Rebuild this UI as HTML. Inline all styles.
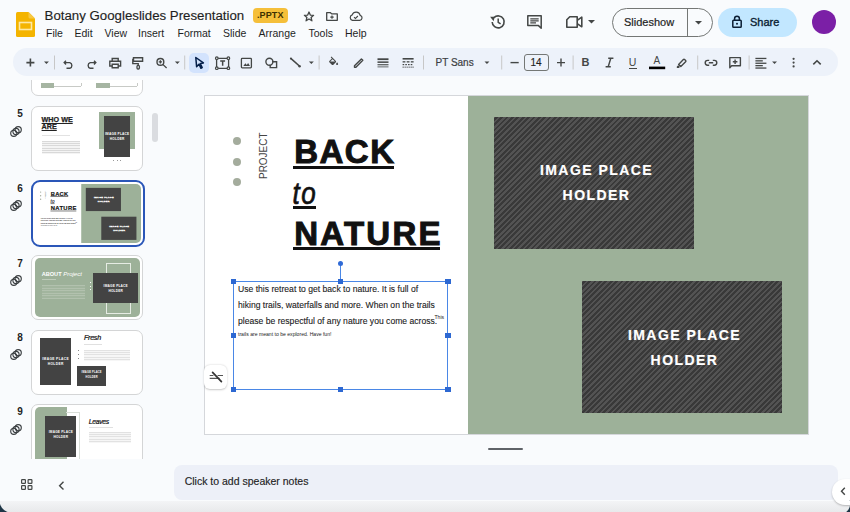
<!DOCTYPE html>
<html><head><meta charset="utf-8">
<style>
*{box-sizing:border-box;margin:0;padding:0}
html,body{width:850px;height:512px;overflow:hidden;background:#f9fbfd;font-family:"Liberation Sans",sans-serif;color:#1f1f1f}
.a{position:absolute}
.t{white-space:nowrap;line-height:1}
svg{position:absolute;overflow:visible}
.menu span{position:absolute;top:28px;font-size:10.5px;color:#1f1f1f;white-space:nowrap;line-height:1}
.tb{left:13px;top:48px;width:825px;height:28px;border-radius:14px;background:#edf2fa}
.sep{position:absolute;top:55px;width:1px;height:14px;background:#c7c7c7}
.ic{stroke:#444746;fill:none;stroke-width:1.5}
.icf{fill:#444746}
.th{position:absolute;left:31.3px;width:112.2px;height:65px;border:1.3px solid #d4d5d6;border-radius:7px;background:#fff;overflow:hidden}
.th .in{position:absolute;left:2.4px;top:2.4px;width:105.4px;height:58.2px;border-radius:5px;overflow:hidden}
.th.sel{left:30.5px;width:114px;height:67px;top:0;border:2px solid #2a56b8;border-radius:9px}
#t6 .ph{background:#454545}
#t6 .ph span{-webkit-text-stroke:1.5px #fff}
.th.sel .in{left:2px;top:2px;width:106px;height:59px}
.num{position:absolute;left:14px;width:12px;text-align:center;font-size:10px;font-weight:bold;color:#1f1f1f;line-height:1}
.tt{font-size:6.2px;font-weight:bold;color:#222;line-height:7px;white-space:nowrap}
.pt{font-size:3.2px;font-weight:bold;color:#fff;text-align:center;line-height:5px;letter-spacing:0.2px;white-space:nowrap}
.ln{background:repeating-linear-gradient(180deg,#d9d9d9 0 1px,#f4f4f4 1px 2.2px)}
.ln3{background:repeating-linear-gradient(180deg,#e2e2e2 0 1px,#f6f6f6 1px 2.2px)}
.ln2{background:repeating-linear-gradient(180deg,#b2c1ae 0 1px,#a2b59e 1px 2.6px)}
.hd{position:absolute;width:5.4px;height:5.4px;background:#2d68d2}
.slide{width:603px;height:339px;background:#fff;overflow:hidden}
.slide>div{position:absolute;white-space:nowrap;line-height:1}
.dot{width:8px;height:8px;border-radius:50%;background:#a4ac9d}
.proj{left:52.5px;font-size:10.5px;color:#444;transform-origin:0 0;transform:rotate(-90deg) scaleX(0.95);top:84px}
.big{left:89.2px;font-size:33px;font-weight:bold;color:#111;letter-spacing:1.5px;-webkit-text-stroke:1px #111}
.to{left:87.5px;top:88px;font-size:26px;font-style:italic;color:#111;transform-origin:0 100%;transform:scaleY(1.22);-webkit-text-stroke:0.6px #111;letter-spacing:1.6px}
.ul{background:#111}
.body{left:33px;font-size:8.6px;color:#1a1a1a;-webkit-text-stroke:0.1px #1a1a1a}
.small{font-size:5.1px;color:#222}
.green{left:263px;top:0;width:340px;height:339px;background:#9db199}
.ph{width:200px;height:132px;background:repeating-linear-gradient(-45deg,#393939 0,#393939 1.9px,#535353 1.9px,#535353 3.8px)}
.ph span{position:absolute;left:0;width:200px;text-align:center;font-size:14px;font-weight:bold;color:#fff;letter-spacing:1.45px;line-height:1;text-indent:5px;-webkit-text-stroke:0.2px #fff}
</style></head>
<body>
<!-- Slides logo -->
<svg style="left:16px;top:12px" width="19" height="25" viewBox="0 0 19 25">
  <path d="M1.5 0H12.5L19 6.5V23.5Q19 25 17.5 25H1.5Q0 25 0 23.5V1.5Q0 0 1.5 0Z" fill="#f4b400"/>
  <path d="M12.5 0L19 6.5H14Q12.5 6.5 12.5 5Z" fill="#f7c843"/>
  <rect x="3.5" y="10.5" width="12" height="7" fill="none" stroke="#fde9a6" stroke-width="1.6"/>
</svg>
<div class="a t" style="left:44.6px;top:8.5px;font-size:13.25px;color:#1f1f1f;line-height:14px;-webkit-text-stroke:0.15px #1f1f1f">Botany Googleslides Presentation</div>
<div class="a" style="left:253px;top:8px;width:35px;height:15px;border-radius:4px;background:#f5bf3a"></div>
<div class="a t" style="left:257px;top:11px;font-size:9px;font-weight:bold;color:#3d3000;letter-spacing:0.1px">.PPTX</div>
<!-- star -->
<svg style="left:303px;top:11px" width="12" height="11" viewBox="0 0 12 11">
  <path d="M6 1L7.3 4.1L10.6 4.3L8.1 6.5L8.9 9.8L6 8L3.1 9.8L3.9 6.5L1.4 4.3L4.7 4.1Z" fill="none" stroke="#444746" stroke-width="1.3" stroke-linejoin="round"/>
</svg>
<!-- folder -->
<svg style="left:326px;top:12px" width="12" height="9" viewBox="0 0 12 9">
  <path d="M0.7 0.7H4.5L5.7 1.9H11.3V8.3H0.7Z" fill="none" stroke="#444746" stroke-width="1.3" stroke-linejoin="round"/>
  <path d="M6 3.5V6.8M4.3 5.1H7.7" stroke="#444746" stroke-width="1.2"/>
</svg>
<!-- cloud -->
<svg style="left:349px;top:12px" width="14" height="9" viewBox="0 0 14 9">
  <path d="M3.4 8.3H10.8A2.5 2.5 0 0 0 11.2 3.4A4.2 4.2 0 0 0 3.2 2.9A2.8 2.8 0 0 0 3.4 8.3Z" fill="none" stroke="#444746" stroke-width="1.2"/>
  <path d="M5 5.2L6.4 6.4L8.9 4" fill="none" stroke="#444746" stroke-width="1.1"/>
</svg>
<div class="menu">
  <span style="left:46px">File</span>
  <span style="left:74.5px">Edit</span>
  <span style="left:104.5px">View</span>
  <span style="left:138px">Insert</span>
  <span style="left:177.5px">Format</span>
  <span style="left:223px">Slide</span>
  <span style="left:258.5px">Arrange</span>
  <span style="left:308.5px">Tools</span>
  <span style="left:345px">Help</span>
</div>

<!-- TOPRIGHT -->
<!-- history -->
<svg style="left:489px;top:14px" width="17" height="16" viewBox="0 0 17 16">
  <path d="M3.2 8A6 6 0 1 0 5 3.6" fill="none" stroke="#444746" stroke-width="1.6"/>
  <path d="M1 3.2L5.6 2.6L5 7.2Z" fill="#444746" transform="rotate(8 5 4)"/>
  <path d="M9.2 4.6V8.3L11.6 9.9" fill="none" stroke="#444746" stroke-width="1.5"/>
</svg>
<!-- comments -->
<svg style="left:527px;top:15px" width="15" height="14" viewBox="0 0 15 14">
  <path d="M0.8 0.8H14.2V13.2L11.5 10.6H0.8Z" fill="none" stroke="#444746" stroke-width="1.5" stroke-linejoin="round"/>
  <path d="M3.3 3.8H11.7M3.3 5.8H11.7M3.3 7.8H9" stroke="#444746" stroke-width="1.2"/>
</svg>
<!-- meet -->
<svg style="left:566px;top:16px" width="17" height="12" viewBox="0 0 17 12">
  <path d="M3.8 0.8H11.2V11.2H0.8V3.8Z" fill="none" stroke="#444746" stroke-width="1.6" stroke-linejoin="round"/>
  <path d="M11.2 4.3L15.8 1.2V10.8L11.2 7.7" fill="none" stroke="#444746" stroke-width="1.6" stroke-linejoin="round"/>
</svg>
<svg style="left:588px;top:20px" width="7" height="4" viewBox="0 0 7 4"><path d="M0 0H7L3.5 3.6Z" fill="#444746"/></svg>
<!-- slideshow -->
<div class="a" style="left:612px;top:8px;width:101px;height:29px;border:1px solid #747775;border-radius:15px"></div>
<div class="a" style="left:686.5px;top:8px;width:1px;height:29px;background:#747775"></div>
<div class="a t" style="left:624px;top:16.8px;font-size:11px;color:#1f1f1f;-webkit-text-stroke:0.2px #1f1f1f">Slideshow</div>
<svg style="left:695px;top:20.5px" width="7" height="4" viewBox="0 0 7 4"><path d="M0 0H7L3.5 3.6Z" fill="#444746"/></svg>
<!-- share -->
<div class="a" style="left:718px;top:8px;width:79px;height:29px;border-radius:15px;background:#c2e7ff"></div>
<svg style="left:732px;top:15px" width="10" height="13" viewBox="0 0 10 13">
  <rect x="0.8" y="5.3" width="8.4" height="6.9" rx="0.8" fill="none" stroke="#0b1e33" stroke-width="1.5"/>
  <path d="M2.6 5.3V3.6A2.4 2.4 0 0 1 7.4 3.6V5.3" fill="none" stroke="#0b1e33" stroke-width="1.5"/>
  <circle cx="5" cy="8.7" r="1" fill="#0b1e33"/>
</svg>
<div class="a t" style="left:750px;top:16.8px;font-size:11px;color:#0b1e33;-webkit-text-stroke:0.35px #0b1e33">Share</div>
<div class="a" style="left:811.5px;top:10px;width:24px;height:24px;border-radius:50%;background:#7b1fa6"></div>

<!-- TOOLBAR -->
<div class="a tb"></div>
<svg style="left:0;top:0" width="850" height="90" viewBox="0 0 850 90">
 <g fill="none" stroke="#444746" stroke-width="1.5">
  <!-- plus -->
  <path d="M30.4 58.6V66.6M26.4 62.6H34.4" stroke-width="1.6"/>
  <!-- undo -->
  <path d="M66 60.8L64.2 62.6L66 64.4M64.4 62.6H69.8A3 3 0 0 1 69.8 68.3H66.5" stroke-width="1.4"/>
  <!-- redo -->
  <path d="M94 60.8L95.8 62.6L94 64.4M95.6 62.6H90.2A3 3 0 0 0 90.2 68.3H93.5" stroke-width="1.4"/>
  <!-- print -->
  <path d="M112.2 61.3V58.5H118.2V61.3M112.2 66H109.8V61.3H120.6V66H118.2M112.2 64.3H118.2V67.7H112.2Z" stroke-width="1.4"/>
  <!-- paint format -->
  <path d="M133.5 57.8H142.6V61.2H133.5ZM133.5 59.5H132.8V63.6H138.2V65.4" stroke-width="1.4"/>
  <rect x="137" y="65.4" width="2.4" height="3.6" rx="1" stroke-width="1.3"/>
  <!-- zoom -->
  <circle cx="160.4" cy="61.9" r="3.4" stroke-width="1.4"/>
  <path d="M162.8 64.4L166.6 68M160.4 60.2V63.6M158.7 61.9H162.1" stroke-width="1.3"/>
  <!-- textbox -->
  <path d="M217 58.4H228.2M217 68.3H228.2M216.6 58.6V68.3M228.6 58.6V68.3" stroke-width="1.3"/>
  <circle cx="216.8" cy="58.2" r="1.3" fill="#edf2fa" stroke-width="1.2"/>
  <circle cx="228.4" cy="58.2" r="1.3" fill="#edf2fa" stroke-width="1.2"/>
  <circle cx="216.8" cy="68.2" r="1.3" fill="#edf2fa" stroke-width="1.2"/>
  <circle cx="228.4" cy="68.2" r="1.3" fill="#edf2fa" stroke-width="1.2"/>
  <path d="M220.2 60.9H225.1M222.65 60.9V65.8" stroke-width="1.5"/>
  <!-- image -->
  <rect x="241.4" y="58.4" width="10" height="9.4" rx="0.8" stroke-width="1.3"/>
  <path d="M243.3 66.1L245.4 63.3L246.8 64.9L248.1 63L250 66.1Z" fill="#444746" stroke="none"/>
  <!-- shapes -->
  <circle cx="269.4" cy="61.7" r="3.5" stroke-width="1.4"/>
  <path d="M272 61.8H276.6V67.6H270.2V64.8" stroke-width="1.4"/>
  <!-- line -->
  <path d="M290.8 58.4L299.4 66" stroke-width="1.6"/>
  <circle cx="290.9" cy="58.4" r="1" fill="#444746" stroke="none"/>
  <circle cx="299.6" cy="66.2" r="1.2" fill="#444746" stroke="none"/>
  <!-- pen -->
  <path d="M354.5 65.8L361.4 58.9L362.8 60.3L355.9 67.2H354.5Z" stroke-width="1.4" stroke-linejoin="round"/>
  <!-- link -->
  <path d="M709.2 60.4H707.6A2.4 2.4 0 0 0 707.6 65.2H709.2M712.8 60.4H714.4A2.4 2.4 0 0 1 714.4 65.2H712.8M708.8 62.8H713.2" stroke-width="1.4"/>
  <!-- comment add -->
  <path d="M729.8 57.6H740.4V65.8H731.6L729.8 67.8Z" stroke-width="1.4" stroke-linejoin="round"/>
  <path d="M735.1 59.4V64M732.8 61.7H737.4" stroke-width="1.4"/>
  <!-- collapse -->
  <path d="M813.3 64.4L817 60.8L820.7 64.4" stroke-width="1.6"/>
  <!-- minus/plus font -->
  <path d="M510.5 62.6H518.7" stroke-width="1.4"/>
  <path d="M561 58.6V66.6M557 62.6H565" stroke-width="1.4"/>
 </g>
 <g fill="#444746">
  <path d="M44 61.4H48.9L46.45 63.9Z"/>
  <path d="M174.9 61.4H179.8L177.35 63.9Z"/>
  <path d="M308.9 61.4H313.8L311.35 63.9Z"/>
  <path d="M484.5 61.4H489.4L486.95 63.9Z"/>
  <path d="M772.1 61.4H777L774.55 63.9Z"/>
  <!-- fill bucket -->
  <path transform="translate(327.6 56.6) scale(0.5)" d="M16.56 8.94L7.62 0 6.21 1.41l2.38 2.38-5.15 5.15c-.59.59-.59 1.54 0 2.12l5.5 5.5c.29.29.68.44 1.06.44s.77-.15 1.06-.44l5.5-5.5c.59-.58.59-1.530 0-2.12zM5.21 10L10 5.21 14.790 10H5.21zM19 11.5s-2 2.17-2 3.5c0 1.1.9 2 2 2s2-.9 2-2c0-1.33-2-3.5-2-3.5z"/>
  <!-- border weight -->
  <rect x="377.5" y="58.3" width="11" height="1.8"/>
  <rect x="377.5" y="61.4" width="11" height="1.5"/>
  <rect x="377.5" y="64.2" width="11" height="1.1"/>
  <rect x="377.5" y="66.5" width="11" height="0.8"/>
  <!-- border dash -->
  <rect x="402.6" y="58" width="11" height="1.6"/>
  <rect x="402.6" y="61.2" width="2.8" height="1.3"/><rect x="406.7" y="61.2" width="2.8" height="1.3"/><rect x="410.8" y="61.2" width="2.8" height="1.3"/>
  <rect x="402.6" y="64" width="1.6" height="1.2"/><rect x="405.3" y="64" width="1.6" height="1.2"/><rect x="408" y="64" width="1.6" height="1.2"/><rect x="410.7" y="64" width="1.6" height="1.2"/>
  <rect x="402.6" y="66.6" width="1.1" height="1.1"/><rect x="404.6" y="66.6" width="1.1" height="1.1"/><rect x="406.6" y="66.6" width="1.1" height="1.1"/><rect x="408.6" y="66.6" width="1.1" height="1.1"/><rect x="410.6" y="66.6" width="1.1" height="1.1"/><rect x="412.5" y="66.6" width="1.1" height="1.1"/>
  <!-- align -->
  <rect x="755.4" y="57.8" width="11" height="1.3"/>
  <rect x="755.4" y="60.2" width="7.4" height="1.3"/>
  <rect x="755.4" y="62.6" width="11" height="1.3"/>
  <rect x="755.4" y="65" width="7.4" height="1.3"/>
  <rect x="755.4" y="67.4" width="11" height="1.3"/>
  <!-- more -->
  <circle cx="793.6" cy="58.8" r="1.1"/><circle cx="793.6" cy="62.6" r="1.1"/><circle cx="793.6" cy="66.4" r="1.1"/>
  <!-- highlighter -->
  <path d="M678.6 64.4L683.4 59.6Q684 59 684.6 59.6L685.6 60.6Q686.2 61.2 685.6 61.8L680.8 66.6Z" fill="none" stroke="#444746" stroke-width="1.4" stroke-linejoin="round"/>
  <path d="M678.2 65.2L680 67L678.8 68H676.8V66.4Z"/>
  <!-- text color bar -->
  <rect x="649" y="66.6" width="16.2" height="2.6" fill="#000"/>
 </g>
 <!-- separators -->
 <g fill="#c7c7c7">
  <rect x="54" y="55.5" width="1" height="14"/>
  <rect x="184.2" y="55.5" width="1" height="14"/>
  <rect x="318.6" y="55.5" width="1" height="14"/>
  <rect x="423" y="55.5" width="1" height="14"/>
  <rect x="501.2" y="55.5" width="1" height="14"/>
  <rect x="572.6" y="55.5" width="1" height="14"/>
  <rect x="697.2" y="55.5" width="1" height="14"/>
  <rect x="748.6" y="55.5" width="1" height="14"/>
 </g>
</svg>
<div class="a" style="left:188.8px;top:52.6px;width:20.4px;height:20px;border-radius:5px;background:#d3e3fd"></div>
<svg style="left:194px;top:56px" width="11" height="14" viewBox="0 0 11 14">
  <path d="M1.8 1.5L9.4 6.9L6.3 7.5L8.2 11.6L6.9 12.3L5 8.2L2.6 10.6Z" fill="none" stroke="#041e49" stroke-width="1.5" stroke-linejoin="round"/>
</svg>
<div class="a t" style="left:435.5px;top:57.5px;font-size:10px;color:#3c4043;-webkit-text-stroke:0.2px #3c4043">PT Sans</div>
<div class="a" style="left:524.4px;top:53.5px;width:24.4px;height:17px;border:1px solid #747775;border-radius:3px"></div>
<div class="a t" style="left:530.5px;top:57.5px;font-size:10px;color:#1f1f1f;-webkit-text-stroke:0.15px #1f1f1f">14</div>
<div class="a t" style="left:581.5px;top:57px;font-size:11px;font-weight:bold;color:#444746">B</div>
<svg style="left:604px;top:57px" width="11" height="11" viewBox="0 0 11 11"><path d="M4.2 1.2H9.4M1.6 9.8H6.8M6.8 1.2L4.2 9.8" fill="none" stroke="#444746" stroke-width="1.4"/></svg>
<div class="a t" style="left:628.8px;top:56.6px;font-size:10.5px;color:#444746">U</div>
<div class="a" style="left:628.8px;top:68px;width:8px;height:1.2px;background:#444746"></div>
<div class="a t" style="left:653.5px;top:55.5px;font-size:10px;color:#444746">A</div>

<!-- FILMSTRIP -->
<div class="a" style="left:0;top:80px;width:170px;height:378.5px;overflow:hidden">
 <div class="a" style="left:0;top:-80px;width:170px;height:540px">
  <!-- T4 -->
  <div class="th" style="top:31px"><div class="in" style="background:#fff">
    <div class="a" style="left:6px;top:49px;width:13.6px;height:4.8px;background:#a6b5a2"></div>
    <div class="a" style="left:19.6px;top:51.5px;width:27px;height:0.8px;background:#c8cac6"></div>
    <div class="a" style="left:46.4px;top:49px;width:0.8px;height:3px;background:#c8cac6"></div>
    <div class="a" style="left:61.8px;top:49px;width:13.2px;height:4.8px;background:#a6b5a2"></div>
    <div class="a" style="left:75px;top:51.5px;width:27.4px;height:0.8px;background:#c8cac6"></div>
    <div class="a" style="left:102px;top:49px;width:0.8px;height:3px;background:#c8cac6"></div>
  </div></div>
  <!-- T5 -->
  <div class="num" style="top:109px">5</div>
  <svg class="lk" style="left:10px;top:125.5px" width="12" height="11" viewBox="0 0 12 11"><g fill="none" stroke="#3c4043" stroke-width="1.15"><circle cx="3.8" cy="7.3" r="3.1"/><circle cx="6" cy="5.5" r="3.1"/><circle cx="8.2" cy="3.7" r="3.1"/></g></svg>
  <div class="th" style="top:106px"><div class="in" style="background:#fff">
    <div class="a tt" style="left:6.9px;top:6.6px;font-size:7.2px;line-height:7.4px;text-decoration:underline;text-decoration-thickness:0.7px;text-underline-offset:0.6px;-webkit-text-stroke:0.25px #222">WHO WE<br>ARE</div>
    <div class="a" style="left:7.2px;top:26px;width:28px;height:1px;background:#e2e2e2"></div>
    <div class="a ln" style="left:7.2px;top:32px;width:38.5px;height:13px"></div>
    <div class="a" style="left:64px;top:2.5px;width:36.6px;height:37px;background:#9db199"></div>
    <div class="a" style="left:69.5px;top:7px;width:26px;height:41px;background:#434343"></div>
    <div class="a pt" style="left:69.5px;top:23px;width:26px">IMAGE PLACE<br>HOLDER</div>
    <div class="a" style="left:78px;top:51px;width:8px;height:1px;background:repeating-linear-gradient(90deg,#999 0 1.2px,transparent 1.2px 3.6px)"></div>
  </div></div>
  <!-- T6 -->
  <div class="num" style="top:184px">6</div>
  <svg class="lk" style="left:10px;top:200px" width="12" height="11" viewBox="0 0 12 11"><g fill="none" stroke="#3c4043" stroke-width="1.15"><circle cx="3.8" cy="7.3" r="3.1"/><circle cx="6" cy="5.5" r="3.1"/><circle cx="8.2" cy="3.7" r="3.1"/></g></svg>
  <div class="th sel" style="top:180px"><div class="in" id="t6"><div class="a slide" style="left:0;top:0;transform-origin:0 0;transform:scale(0.1758)">
  <div class="dot" style="left:28.2px;top:41.9px"></div>
  <div class="dot" style="left:28.2px;top:62.8px"></div>
  <div class="dot" style="left:28.2px;top:83.1px"></div>
  <div class="proj">PROJECT</div>
  <div class="big" style="top:40px">BACK</div>
  <div class="ul" style="left:88px;top:70.8px;width:101px;height:3px"></div>
  <div class="to">to</div>
  <div class="ul" style="left:88.2px;top:111.3px;width:22.8px;height:2.7px"></div>
  <div class="big" style="top:121.5px;letter-spacing:2.25px">NATURE</div>
  <div class="ul" style="left:88.3px;top:151.6px;width:147px;height:3.2px"></div>
  <div class="body" style="top:189.7px">Use this retreat to get back to nature. It is full of</div>
  <div class="body" style="top:205.7px">hiking trails, waterfalls and more. When on the trails</div>
  <div class="body" style="top:222px">please be respectful of any nature you come across.</div>
  <div class="small" style="left:229.5px;top:220px">This</div>
  <div class="small" style="left:33px;top:236.7px">trails are meant to be explored. Have fun!</div>
  <div class="green"></div>
  <div class="ph" style="left:289px;top:22px"><span style="top:46.4px">IMAGE PLACE</span><span style="top:71.4px">HOLDER</span></div>
  <div class="ph" style="left:377px;top:186px"><span style="top:47.2px">IMAGE PLACE</span><span style="top:71.8px">HOLDER</span></div>
</div></div></div>
  <!-- T7 -->
  <div class="num" style="top:258.5px">7</div>
  <svg class="lk" style="left:10px;top:274.5px" width="12" height="11" viewBox="0 0 12 11"><g fill="none" stroke="#3c4043" stroke-width="1.15"><circle cx="3.8" cy="7.3" r="3.1"/><circle cx="6" cy="5.5" r="3.1"/><circle cx="8.2" cy="3.7" r="3.1"/></g></svg>
  <div class="th" style="top:255px"><div class="in" style="background:#9db199">
    <div class="a tt" style="left:7px;top:12.5px;color:#fff;font-size:5.6px">ABOUT <i style="font-weight:normal;font-size:6px">Project</i></div>
    <div class="a" style="left:7px;top:20.5px;width:14px;height:1px;background:#bfccbb"></div>
    <div class="a ln2" style="left:7px;top:26.5px;width:43px;height:14px"></div>
    <div class="a" style="left:55px;top:23.5px;width:1.3px;height:9px;background:repeating-linear-gradient(180deg,#fff 0 1.3px,transparent 1.3px 3.6px)"></div>
    <div class="a" style="left:71.6px;top:4.4px;width:25px;height:51.6px;border:1px solid #e6ece4"></div>
    <div class="a" style="left:58.6px;top:14.4px;width:45px;height:30px;background:#434343"></div>
    <div class="a pt" style="left:58.6px;top:26px;width:45px">IMAGE PLACE<br>HOLDER</div>
  </div></div>
  <!-- T8 -->
  <div class="num" style="top:332.5px">8</div>
  <svg class="lk" style="left:10px;top:349px" width="12" height="11" viewBox="0 0 12 11"><g fill="none" stroke="#3c4043" stroke-width="1.15"><circle cx="3.8" cy="7.3" r="3.1"/><circle cx="6" cy="5.5" r="3.1"/><circle cx="8.2" cy="3.7" r="3.1"/></g></svg>
  <div class="th" style="top:329.5px"><div class="in" style="background:#fff">
    <div class="a" style="left:5.3px;top:5.1px;width:31.4px;height:47.4px;background:#434343"></div>
    <div class="a pt" style="left:5.3px;top:24px;width:31.4px;font-size:3.3px;line-height:5.6px;letter-spacing:0.35px">IMAGE PLACE<br>HOLDER</div>
    <div class="a" style="left:42.7px;top:33.1px;width:28.6px;height:19.6px;background:#434343"></div>
    <div class="a pt" style="left:42.7px;top:38.5px;width:28.6px;font-size:2.6px;line-height:4.4px">IMAGE PLACE<br>HOLDER</div>
    <div class="a" style="left:49.3px;top:1px;font-size:7.2px;font-style:italic;color:#111;line-height:1;letter-spacing:-0.3px;-webkit-text-stroke:0.2px #111">Fresh</div>
    <div class="a" style="left:49.3px;top:11.6px;width:18px;height:1px;background:#e0e0e0"></div>
    <div class="a ln3" style="left:49.3px;top:17px;width:46px;height:11px"></div>
    <div class="a" style="left:43px;top:17.6px;width:1px;height:12px;background:repeating-linear-gradient(180deg,#888 0 1px,transparent 1px 4px)"></div>
  </div></div>
  <!-- T9 -->
  <div class="num" style="top:407px">9</div>
  <svg class="lk" style="left:10px;top:423.5px" width="12" height="11" viewBox="0 0 12 11"><g fill="none" stroke="#3c4043" stroke-width="1.15"><circle cx="3.8" cy="7.3" r="3.1"/><circle cx="6" cy="5.5" r="3.1"/><circle cx="8.2" cy="3.7" r="3.1"/></g></svg>
  <div class="th" style="top:404px"><div class="in" style="background:#fff">
    <div class="a" style="left:0;top:0;width:32px;height:60px;background:#9db199"></div>
    <div class="a" style="left:31.5px;top:4.5px;width:14px;height:56px;border:1px solid #d9ded7;border-left:none"></div>
    <div class="a" style="left:10.7px;top:8.6px;width:31px;height:41.4px;background:#434343"></div>
    <div class="a pt" style="left:10.7px;top:23px;width:31px">IMAGE PLACE<br>HOLDER</div>
    <div class="a" style="left:54px;top:12px;font-size:6.8px;font-style:italic;color:#111;line-height:1;letter-spacing:-0.3px;-webkit-text-stroke:0.2px #111">Leaves</div>
    <div class="a" style="left:54.4px;top:20px;width:24px;height:1px;background:#e0e0e0"></div>
    <div class="a ln3" style="left:54.4px;top:25px;width:42px;height:11px"></div>
  </div></div>
 </div>
</div>
<div class="a" style="left:152.4px;top:113px;width:5.6px;height:29.4px;border-radius:3px;background:#dadce0"></div>

<!-- SLIDE -->
<div class="a" style="left:204px;top:95px;width:605px;height:340px;border:1px solid #d5d7db;background:#fff"></div>
<div class="a slide" style="left:205px;top:95px">
  <div class="dot" style="left:28.2px;top:41.9px"></div>
  <div class="dot" style="left:28.2px;top:62.8px"></div>
  <div class="dot" style="left:28.2px;top:83.1px"></div>
  <div class="proj">PROJECT</div>
  <div class="big" style="top:40px">BACK</div>
  <div class="ul" style="left:88px;top:70.8px;width:101px;height:3px"></div>
  <div class="to">to</div>
  <div class="ul" style="left:88.2px;top:111.3px;width:22.8px;height:2.7px"></div>
  <div class="big" style="top:121.5px;letter-spacing:2.25px">NATURE</div>
  <div class="ul" style="left:88.3px;top:151.6px;width:147px;height:3.2px"></div>
  <div class="body" style="top:189.7px">Use this retreat to get back to nature. It is full of</div>
  <div class="body" style="top:205.7px">hiking trails, waterfalls and more. When on the trails</div>
  <div class="body" style="top:222px">please be respectful of any nature you come across.</div>
  <div class="small" style="left:229.5px;top:220px">This</div>
  <div class="small" style="left:33px;top:236.7px">trails are meant to be explored. Have fun!</div>
  <div class="green"></div>
  <div class="ph" style="left:289px;top:22px"><span style="top:46.4px">IMAGE PLACE</span><span style="top:71.4px">HOLDER</span></div>
  <div class="ph" style="left:377px;top:186px"><span style="top:47.2px">IMAGE PLACE</span><span style="top:71.8px">HOLDER</span></div>
</div>

<div class="a" style="left:204px;top:95px;width:605px;height:1px;background:#d5d7db"></div>
<!-- SELECTION OVERLAY -->
<div class="a" style="left:232.5px;top:280.5px;width:215.5px;height:109px;border:1.5px solid #4a87e6"></div>
<div class="a" style="left:339.5px;top:264px;width:1px;height:17px;background:#4a87e6"></div>
<div class="a" style="left:337.5px;top:261px;width:5px;height:5px;border-radius:50%;background:#2f6ad6"></div>
<div class="hd" style="left:230.8px;top:278.6px"></div>
<div class="hd" style="left:337.5px;top:278.6px"></div>
<div class="hd" style="left:445.2px;top:278.6px"></div>
<div class="hd" style="left:230.8px;top:332.5px"></div>
<div class="hd" style="left:445.2px;top:332.5px"></div>
<div class="hd" style="left:230.8px;top:386.5px"></div>
<div class="hd" style="left:337.5px;top:386.5px"></div>
<div class="hd" style="left:445.2px;top:386.5px"></div>
<div class="a" style="left:204.3px;top:364.6px;width:23.2px;height:24.6px;border-radius:6px;background:#fff;box-shadow:0 0.5px 2px rgba(0,0,0,0.22)"></div>
<svg style="left:204px;top:364px" width="24" height="25" viewBox="204 364 24 25">
  <path d="M209.7 375.5H213.4M217.6 375.5H223M209.7 378.4H219.6" stroke="#555" stroke-width="1.1"/>
  <path d="M212.6 372.4L221.4 381.6" stroke="#333" stroke-width="1.7" stroke-linecap="round"/>
</svg>
<div class="a" style="left:487.8px;top:448.3px;width:35.4px;height:2px;border-radius:1px;background:#5f6368"></div>
<!-- NOTES -->
<div class="a" style="left:173.6px;top:465px;width:664.4px;height:35px;border-radius:8px;background:#edf0f8"></div>
<div class="a t" style="left:184.7px;top:475.6px;font-size:10.5px;color:#1f1f1f;-webkit-text-stroke:0.15px #1f1f1f">Click to add speaker notes</div>
<svg style="left:20.5px;top:479px" width="12" height="12" viewBox="0 0 12 12"><g fill="none" stroke="#444746" stroke-width="1.2"><rect x="0.6" y="0.6" width="3.8" height="3.8" rx="0.6"/><rect x="7.1" y="0.6" width="3.8" height="3.8" rx="0.6"/><rect x="0.6" y="6.6" width="3.8" height="3.8" rx="0.6"/><rect x="7.1" y="6.6" width="3.8" height="3.8" rx="0.6"/></g></svg>
<svg style="left:58px;top:480.5px" width="7" height="10" viewBox="0 0 7 10"><path d="M5.5 0.8L1.6 4.7L5.5 8.6" fill="none" stroke="#444746" stroke-width="1.4"/></svg>
<div class="a" style="left:0;top:500.5px;width:850px;height:11.5px;background:linear-gradient(180deg,#f3f4f6,#e8e9eb)"></div>
<div class="a" style="left:832px;top:479px;width:30px;height:26px;border-radius:13px;background:#fff;box-shadow:0 1px 2px rgba(0,0,0,0.25)"></div>
<svg style="left:839.5px;top:487px" width="7" height="9" viewBox="0 0 7 9"><path d="M4.8 0.8L1.5 4.3L4.8 7.8" fill="none" stroke="#444746" stroke-width="1.4"/></svg>
<div class="a" style="left:0;top:498px;width:10px;height:14px;background:radial-gradient(circle 13.6px at 12.4px 1.8px,transparent 12.6px,#1e3546 13.6px)"></div>
<div class="a" style="left:840px;top:500px;width:10px;height:12px;background:radial-gradient(circle 11.8px at -1.1px 3.4px,transparent 10.8px,#1e3546 11.8px)"></div>

</body></html>
